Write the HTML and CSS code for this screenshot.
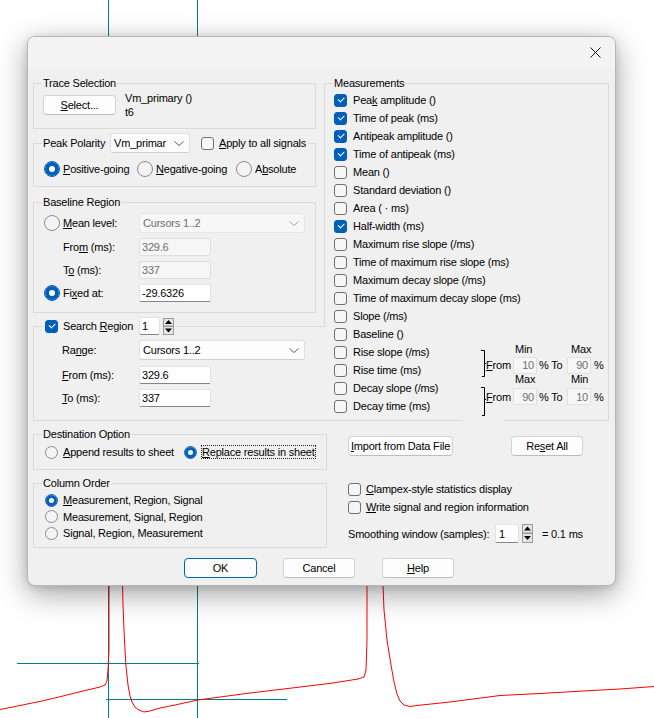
FILE: index.html
```html
<!DOCTYPE html>
<html>
<head>
<meta charset="utf-8">
<title>Measurements</title>
<link rel="stylesheet" href="styles.css">
</head>
<body>
<div class="desk">
  <svg class="plot" width="654" height="718" viewBox="0 0 654 718">
    <g stroke="#008080" stroke-width="1" shape-rendering="crispEdges">
      <line x1="108.5" y1="0" x2="108.5" y2="718"/>
      <line x1="197.5" y1="0" x2="197.5" y2="718"/>
      <line x1="17" y1="663.5" x2="199" y2="663.5"/>
      <line x1="106" y1="699.5" x2="287" y2="699.5"/>
    </g>
    <polyline fill="none" stroke="#ff0000" stroke-width="1" points="0,709.5 20,705.5 42,701 63,696 83,691 100,687 105,685 107,681 108,670 109,650 109,560 122,560 123,605 124,630 125,650 126,666 128,685 130,696 132,702 135,707 139,710 144,712 150,711 160,708 175,705 198,700 220,697 250,693 292,688 333,683 358,679 364,677 366,670 367,640 367,560 382,560 384,610 387,640 391,665 394,682 397,694 400,701 404,705 410,706.5 417,705.5 450,702 500,695.5 540,693.5 583,691 620,689 654,686.5"/>
  </svg>

  <div class="dialog">
    <div class="titlebar">
      <svg class="close" width="11" height="11" viewBox="0 0 11 11"><path d="M0.5 0.5 L10.5 10.5 M10.5 0.5 L0.5 10.5" stroke="#1b1b1b" stroke-width="1" fill="none"/></svg>
    </div>
    <div class="content">
      <div class="cols">
        <div class="left">
          <fieldset class="grp trace">
            <legend>Trace Selection</legend>
            <div class="trace-row">
              <button class="btn sel"><span><u>S</u>elect...</span></button>
              <div class="trace-info"><div>Vm_primary ()</div><div>t6</div></div>
            </div>
          </fieldset>

          <fieldset class="grp peak">
            <legend class="lg-ctl lg20">
              <span class="pp-lbl">Peak Polarity</span>
              <span class="combo w80"><span>Vm_primar</span><svg class="chev" width="10" height="5" viewBox="0 0 10 5"><path d="M0.5 0.5 L5 4.5 L9.5 0.5" fill="none" stroke="#5c5c5c"/></svg></span>
              <span class="cb apply-cb"></span>
              <span class="apply-t"><u>A</u>pply to all signals</span>
            </legend>
            <div class="radios pol">
              <label class="ri w94"><span class="rb on first"></span><span><u>P</u>ositive-going</span></label>
              <label class="ri w99"><span class="rb"></span><span><u>N</u>egative-going</span></label>
              <label class="ri"><span class="rb"></span><span>A<u>b</u>solute</span></label>
            </div>
          </fieldset>

          <fieldset class="grp base">
            <legend>Baseline Region</legend>
            <div class="frm">
              <div class="fr">
                <label class="fl"><span class="rb first"></span><span><u>M</u>ean level:</span></label>
                <span class="combo dis w166"><span>Cursors 1..2</span><svg class="chev" width="10" height="5" viewBox="0 0 10 5"><path d="M0.5 0.5 L5 4.5 L9.5 0.5" fill="none" stroke="#a6a6a6"/></svg></span>
              </div>
              <div class="fr">
                <span class="fl ind"><span>Fro<u>m</u> (ms):</span></span>
                <span class="edit dis w72">329.6</span>
              </div>
              <div class="fr">
                <span class="fl ind"><span>T<u>o</u> (ms):</span></span>
                <span class="edit dis w72">337</span>
              </div>
              <div class="fr">
                <label class="fl"><span class="rb on first"></span><span>Fi<u>x</u>ed at:</span></label>
                <span class="edit w72">-29.6326</span>
              </div>
            </div>
          </fieldset>

          <fieldset class="grp search">
            <legend class="lg-ctl lg18">
              <label class="sr-lbl"><span class="cb on"></span><span>Search <u>R</u>egion</span></label>
              <span class="edit w21">1</span>
              <svg class="spin" width="11" height="17" viewBox="0 0 11 17"><rect x="0.5" y="0.5" width="10" height="7.5" fill="#e6e6e6" stroke="#9a9a9a"/><rect x="0.5" y="8.5" width="10" height="8" fill="#e6e6e6" stroke="#9a9a9a"/><path d="M5.5 2 L9 6 H2Z" fill="#000"/><path d="M2 10.5 H9 L5.5 14.5Z" fill="#000"/></svg>
            </legend>
            <div class="frm srch">
              <div class="fr">
                <span class="fl ind2"><span>Ra<u>n</u>ge:</span></span>
                <span class="combo w166"><span>Cursors 1..2</span><svg class="chev" width="10" height="5" viewBox="0 0 10 5"><path d="M0.5 0.5 L5 4.5 L9.5 0.5" fill="none" stroke="#5c5c5c"/></svg></span>
              </div>
              <div class="fr gap1">
                <span class="fl ind2"><span><u>F</u>rom (ms):</span></span>
                <span class="edit w72">329.6</span>
              </div>
              <div class="fr">
                <span class="fl ind2"><span><u>T</u>o (ms):</span></span>
                <span class="edit w72">337</span>
              </div>
            </div>
          </fieldset>

          <fieldset class="grp dest">
            <legend>Destination Option</legend>
            <div class="radios dst">
              <label class="ri w141"><span class="rb sm first2"></span><span><u>A</u>ppend results to sheet</span></label>
              <label class="ri"><span class="rb sm on"></span><span class="focus"><u>R</u>eplace results in sheet</span></label>
            </div>
          </fieldset>

          <fieldset class="grp order">
            <legend>Column Order</legend>
            <div class="olist">
              <label class="ri"><span class="rb sm on first2"></span><span><u>M</u>easurement, Region, Signal</span></label>
              <label class="ri"><span class="rb sm first2"></span><span>Measurement, Signal, Region</span></label>
              <label class="ri"><span class="rb sm first2"></span><span>Signal, Region, Measurement</span></label>
            </div>
          </fieldset>
        </div>

        <div class="right">
          <fieldset class="grp meas">
            <legend>Measurements</legend>
            <div class="mlist">
              <label class="mi"><span class="cb on"></span><span>Pea<u>k</u> amplitude ()</span></label>
              <label class="mi"><span class="cb on"></span><span>Time of peak (ms)</span></label>
              <label class="mi"><span class="cb on"></span><span>Antipeak amplitude ()</span></label>
              <label class="mi"><span class="cb on"></span><span>Time of antipeak (ms)</span></label>
              <label class="mi"><span class="cb"></span><span>Mean ()</span></label>
              <label class="mi"><span class="cb"></span><span>Standard deviation ()</span></label>
              <label class="mi"><span class="cb"></span><span>Area ( · ms)</span></label>
              <label class="mi"><span class="cb on"></span><span>Half-width (ms)</span></label>
              <label class="mi"><span class="cb"></span><span>Maximum rise slope (/ms)</span></label>
              <label class="mi"><span class="cb"></span><span>Time of maximum rise slope (ms)</span></label>
              <label class="mi"><span class="cb"></span><span>Maximum decay slope (/ms)</span></label>
              <label class="mi"><span class="cb"></span><span>Time of maximum decay slope (ms)</span></label>
              <label class="mi"><span class="cb"></span><span>Slope (/ms)</span></label>
              <label class="mi"><span class="cb"></span><span>Baseline ()</span></label>
              <div class="mrange">
                <div class="mcol">
                  <label class="mi"><span class="cb"></span><span>Rise slope (/ms)</span></label>
                  <label class="mi"><span class="cb"></span><span>Rise time (ms)</span></label>
                  <label class="mi"><span class="cb"></span><span>Decay slope (/ms)</span></label>
                  <label class="mi"><span class="cb"></span><span>Decay time (ms)</span></label>
                </div>
                <div class="range">
                  <svg class="br b1" width="5" height="27" viewBox="0 0 5 27"><path d="M0 0.5 H3.5 V13.5 H5 M3.5 13.5 V26.5 H1" fill="none" stroke="#000"/></svg>
                  <span class="hd c3 r1">Min</span>
                  <span class="hd c5 r1">Max</span>
                  <span class="rl c2 r2"><span><u>F</u>rom</span></span>
                  <span class="redit c3 r2">10</span>
                  <span class="rl c4 r2">% To</span>
                  <span class="redit c5 r2">90</span>
                  <span class="rl c6 r2">%</span>
                  <svg class="br b2" width="5" height="29" viewBox="0 0 5 29"><path d="M0 0.5 H3.5 V12.5 H5 M3.5 12.5 V28.5 H1" fill="none" stroke="#000"/></svg>
                  <span class="hd c3 r3">Max</span>
                  <span class="hd c5 r3">Min</span>
                  <span class="rl c2 r4"><span><u>F</u>rom</span></span>
                  <span class="redit c3 r4">90</span>
                  <span class="rl c4 r4">% To</span>
                  <span class="redit c5 r4">10</span>
                  <span class="rl c6 r4">%</span>
                </div>
              </div>
            </div>
          </fieldset>

          <div class="acts">
            <button class="btn imp"><span><u>I</u>mport from Data File</span></button>
            <button class="btn rst"><span>Re<u>s</u>et All</span></button>
          </div>
          <div class="opts">
            <label class="oi"><span class="cb"></span><span><u>C</u>lampex-style statistics display</span></label>
            <label class="oi"><span class="cb"></span><span><u>W</u>rite signal and region information</span></label>
          </div>
          <div class="smooth">
            <span class="sm-l">Smoothing window (samples):</span>
            <span class="edit w24 h19">1</span>
            <svg class="spin" width="11" height="19" viewBox="0 0 11 19"><rect x="0.5" y="0.5" width="10" height="8.5" fill="#e6e6e6" stroke="#9a9a9a"/><rect x="0.5" y="9.5" width="10" height="9" fill="#e6e6e6" stroke="#9a9a9a"/><path d="M5.5 2.5 L9 6.5 H2Z" fill="#000"/><path d="M2 12 H9 L5.5 16Z" fill="#000"/></svg>
            <span class="sm-r">= 0.1 ms</span>
          </div>
        </div>
      </div>

      <div class="foot">
        <button class="btn def w73">OK</button>
        <button class="btn w72">Cancel</button>
        <button class="btn w72 help"><span><u>H</u>elp</span></button>
      </div>
    </div>
  </div>
</div>
</body>
</html>
```

FILE: styles.css
```css
html, body {
  margin: 0;
  padding: 0;
}
body {
  width: 654px;
  height: 718px;
  overflow: hidden;
  background: #ffffff;
  font-family: "Liberation Sans", Arial, sans-serif;
  font-size: 11px;
  letter-spacing: -0.2px;
  color: #000;
}
u { text-decoration: underline; text-decoration-thickness: 1px; text-underline-offset: 1px; }

.desk {
  position: relative;
  width: 654px;
  height: 718px;
}
.plot {
  position: absolute;
  left: 0;
  top: 0;
}

.dialog {
  position: absolute;
  left: 27px;
  top: 36px;
  width: 589px;
  height: 550px;
  box-sizing: border-box;
  border: 1px solid #b6b6b6;
  border-radius: 8px;
  background: #f0f0f0;
  box-shadow: 0 8px 30px rgba(0, 0, 0, 0.36), 0 2px 8px rgba(0, 0, 0, 0.12);
  overflow: hidden;
}
.titlebar {
  height: 31px;
  background: #f3f3f3;
  display: flex;
  align-items: center;
  justify-content: flex-end;
  padding-right: 14px;
}
.content {
  padding: 8px 0 0 5px;
}
.cols {
  display: grid;
  grid-template-columns: 291px 285px;
  height: 472px;
  align-items: start;
}
.left, .right {
  display: flex;
  flex-direction: column;
}

/* group boxes */
.grp {
  margin: 0;
  padding: 0 0 0 9px;
  border: 1px solid #dadada;
  box-sizing: border-box;
  min-width: 0;
  min-inline-size: 0;
}
.grp > legend {
  padding: 0 1px;
  margin-left: -1px;
  line-height: 14px;
  height: 14px;
}
.grp > legend.lg-ctl {
  display: flex;
  align-items: center;
  padding-right: 2px;
}
.grp > legend.lg20 { height: 20px; }
.grp > legend.lg18 { height: 18px; }

.trace { width: 283px; height: 53px; }
.peak { width: 283px; height: 54px; margin-top: 4px; }
.base { width: 283px; height: 118px; margin-top: 8px; }
.search { width: 292px; height: 104px; margin-top: 4px; border-right: none; background: #f0f0f0; position: relative; z-index: 1; }
.dest { width: 294px; height: 43px; margin-top: 6px; }
.order { width: 294px; height: 72px; margin-top: 6px; }
.meas { width: 285px; height: 345px; }

/* controls */
.btn {
  box-sizing: border-box;
  height: 20px;
  border: 1px solid #d3d3d3;
  border-bottom-color: #bdbdbd;
  border-radius: 4px;
  background: #fdfdfd;
  font: inherit;
  letter-spacing: inherit;
  color: #000;
  padding: 0;
  display: flex;
  align-items: center;
  justify-content: center;
  line-height: 14px;
}
.btn.def { border: 1px solid #0063b1; }

.combo {
  box-sizing: border-box;
  height: 20px;
  background: #fdfdfd;
  border: 1px solid #dfdfdf;
  border-bottom-color: #cfcfcf;
  border-radius: 3px;
  display: flex;
  align-items: center;
  justify-content: space-between;
  padding: 0 5px 0 3px;
}
.combo.dis {
  background: #f7f7f7;
  border-color: #e6e6e6;
  color: #6f6f6f;
}
.w80 { width: 80px; }
.w166 { width: 166px; }

.edit {
  box-sizing: border-box;
  height: 18px;
  background: #ffffff;
  border: 1px solid #e2e2e2;
  border-bottom-color: #868686;
  border-radius: 2px;
  padding: 0 2px;
  display: flex;
  align-items: center;
}
.edit.dis {
  background: #f6f6f6;
  border-color: #dedede;
  color: #6f6f6f;
}
.w72 { width: 72px; }
.w21 { width: 21px; }
.w24 { width: 24px; }
.h19 { height: 19px; padding-left: 3px; }

.cb {
  flex: none;
  width: 13px;
  height: 13px;
  box-sizing: border-box;
  border: 1px solid #707070;
  border-radius: 3px;
  background: #f6f6f6;
  position: relative;
}
.cb.on {
  background: #005fb8;
  border-color: #005fb8;
}
.cb.on::after {
  content: "";
  position: absolute;
  left: 3px;
  top: 2.5px;
  width: 5px;
  height: 2.5px;
  border-left: 1px solid #fff;
  border-bottom: 1px solid #fff;
  transform: rotate(-45deg);
}

.rb {
  flex: none;
  width: 16px;
  height: 16px;
  box-sizing: border-box;
  border-radius: 50%;
  border: 1px solid #8b8b8b;
  background: #f4f4f4;
}
.rb.on {
  border-color: #005fb8;
  background: #ffffff;
  box-shadow: inset 0 0 0 4px #005fb8;
}
.rb.sm { width: 13px; height: 13px; }
.rb.sm.on { box-shadow: inset 0 0 0 3px #005fb8; }
.rb.first { margin-left: 1px; }
.rb.first2 { margin-left: 2px; }

.spin { flex: none; display: block; }

/* trace selection */
.trace-row {
  display: flex;
  align-items: flex-start;
  gap: 9px;
  margin-top: 1px;
}
.sel { width: 73px; margin-top: 4px; }
.trace-info { line-height: 14px; }

/* peak polarity */
.pp-lbl { width: 67px; }
.apply-cb { margin-left: 11px; }
.apply-t { margin-left: 5px; }
.radios {
  display: flex;
  align-items: center;
  height: 16px;
}
.pol { margin-top: 8px; }
.ri {
  display: flex;
  align-items: center;
  gap: 3px;
  flex: none;
}
.w94 { width: 94px; }
.w99 { width: 99px; }
.w141 { width: 141px; }

/* form rows */
.frm {
  display: flex;
  flex-direction: column;
  gap: 5px;
  margin-top: 4px;
}
.srch { margin-top: 5px; }
.gap1 { margin-top: 1px; }
.fr {
  display: flex;
  align-items: center;
}
.fl {
  flex: none;
  width: 96px;
  box-sizing: border-box;
  display: flex;
  align-items: center;
  gap: 3px;
}
.ind { padding-left: 20px; }
.ind2 { padding-left: 19px; }

/* search region legend */
.sr-lbl {
  width: 96px;
  box-sizing: border-box;
  padding-left: 2px;
  display: flex;
  align-items: center;
  gap: 5px;
}
.lg18 .spin { margin-left: 3px; }

/* destination */
.dst { margin-top: 3px; }
.dst .ri { gap: 5px; }
.dst .ri + .ri { gap: 4px; }
.focus {
  border: 1px dotted #222;
  line-height: 12px;
  padding: 0;
}

/* column order */
.olist {
  margin-top: 2px;
  display: flex;
  flex-direction: column;
}
.olist .ri {
  height: 16.5px;
  gap: 5px;
}

/* measurements */
.mlist {
  margin-top: 1px;
  display: flex;
  flex-direction: column;
}
.mi {
  height: 18px;
  display: flex;
  align-items: center;
  gap: 6px;
}
.mrange { display: flex; }
.mcol { width: 147px; flex: none; }
.range {
  position: relative;
  display: grid;
  grid-template-columns: 5px 27px 24px 30px 24px 10px;
  grid-template-rows: 14px 18px 10px 25px;
  margin-top: -1px;
}
.range::after {
  content: "";
  position: absolute;
  left: -18px;
  top: 77px;
  width: 41px;
  height: 2px;
  background: #f0f0f0;
}
.br { display: block; overflow: visible; grid-column: 1; }
.b1 { grid-row: 1 / 3; margin-top: 8px; }
.b2 { grid-row: 3 / 5; margin-top: 13px; }
.c2 { grid-column: 2; }
.c3 { grid-column: 3; }
.c4 { grid-column: 4; }
.c5 { grid-column: 5; }
.c6 { grid-column: 6; }
.r1 { grid-row: 1; }
.r2 { grid-row: 2; }
.r3 { grid-row: 3; }
.r4 { grid-row: 4; }
.hd {
  display: flex;
  align-items: center;
  line-height: 10px;
}
.hd.c3 { padding-left: 2px; }
.hd.c5 { padding-left: 4px; }
.rl {
  display: flex;
  align-items: center;
  white-space: nowrap;
}
.rl.r4 { align-self: start; margin-top: 4px; height: 17px; }
.rl.c4 { padding-left: 2px; }
.rl.c6 { padding-left: 3px; }
.redit {
  box-sizing: border-box;
  height: 17px;
  align-self: center;
  background: #f6f6f6;
  border: 1px solid #e2e2e2;
  color: #6f6f6f;
  display: flex;
  align-items: center;
  justify-content: flex-end;
  padding-right: 2px;
}
.redit.r4 { align-self: start; margin-top: 4px; }

/* lower right */
.acts {
  display: flex;
  gap: 58px;
  margin-top: 15px;
  padding-left: 24px;
}
.imp { width: 105px; }
.rst { width: 72px; }
.opts {
  margin-top: 24px;
  padding-left: 24px;
}
.oi {
  height: 18px;
  display: flex;
  align-items: center;
  gap: 5px;
}
.smooth {
  margin-top: 8px;
  padding-left: 24px;
  height: 19px;
  display: flex;
  align-items: center;
}
.sm-l { width: 147px; flex: none; }
.smooth .spin { margin-left: 3px; }
.sm-r { margin-left: 9px; }

/* footer */
.foot {
  display: flex;
  gap: 26px;
  padding-left: 151px;
  margin-top: 10px;
}
.w73 { width: 73px; }
.w72 { width: 72px; }
.help { margin-left: 1px; }
```
